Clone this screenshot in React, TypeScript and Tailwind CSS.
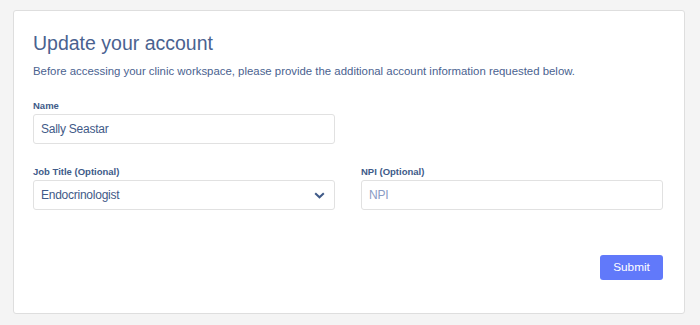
export default function App() {
  return (
    <div className="min-h-screen bg-[#f4f4f4] pt-[10px] pl-[13px] font-['Liberation_Sans',Arial,sans-serif]">
      <div className="h-[304px] w-[672px] rounded-[3px] border border-[#dedede] bg-white pl-[19px] pr-[21px] pt-[20px]">
        <h1 className="text-[19.5px] leading-[24px] text-[#4a6290]">Update your account</h1>
        <p className="mt-[8px] text-[11.4px] leading-[16px] text-[#4a6290]">
          Before accessing your clinic workspace, please provide the additional account information requested below.
        </p>

        <div className="mt-[23px] w-[302px]">
          <label className="mb-[4px] block text-[9.5px] font-bold leading-[8px] text-[#405b89]">Name</label>
          <div className="flex h-[30px] items-center rounded-[3px] border border-[#e1e1e1] px-[7px] text-[12px] tracking-[-0.25px] text-[#3f5a88]">
            Sally Seastar
          </div>
        </div>

        <div className="mt-[24px] grid grid-cols-2 gap-[26px]">
          <div>
            <label className="mb-[4px] block text-[9.5px] font-bold leading-[8px] text-[#405b89]">Job Title (Optional)</label>
            <div className="flex h-[30px] items-center justify-between rounded-[3px] border border-[#e1e1e1] pl-[7px] pr-[9px] text-[12px] tracking-[-0.25px] text-[#3f5a88]">
              <span>Endocrinologist</span>
              <svg width="11" height="7" viewBox="0 0 11 7" fill="none">
                <path d="M1.2 1.2 L5.5 5.3 L9.8 1.2" stroke="#3f5a88" strokeWidth="2" />
              </svg>
            </div>
          </div>
          <div>
            <label className="mb-[4px] block text-[9.5px] font-bold leading-[8px] text-[#405b89]">NPI (Optional)</label>
            <div className="flex h-[30px] items-center rounded-[3px] border border-[#e1e1e1] px-[7px] text-[12px] tracking-[-0.25px] text-[#8a9cc4]">
              NPI
            </div>
          </div>
        </div>

        <div className="mt-[45px] flex justify-end">
          <button className="h-[25px] w-[63px] rounded-[3px] bg-[#6179fa] text-[11.8px] text-white">Submit</button>
        </div>
      </div>
    </div>
  );
}
